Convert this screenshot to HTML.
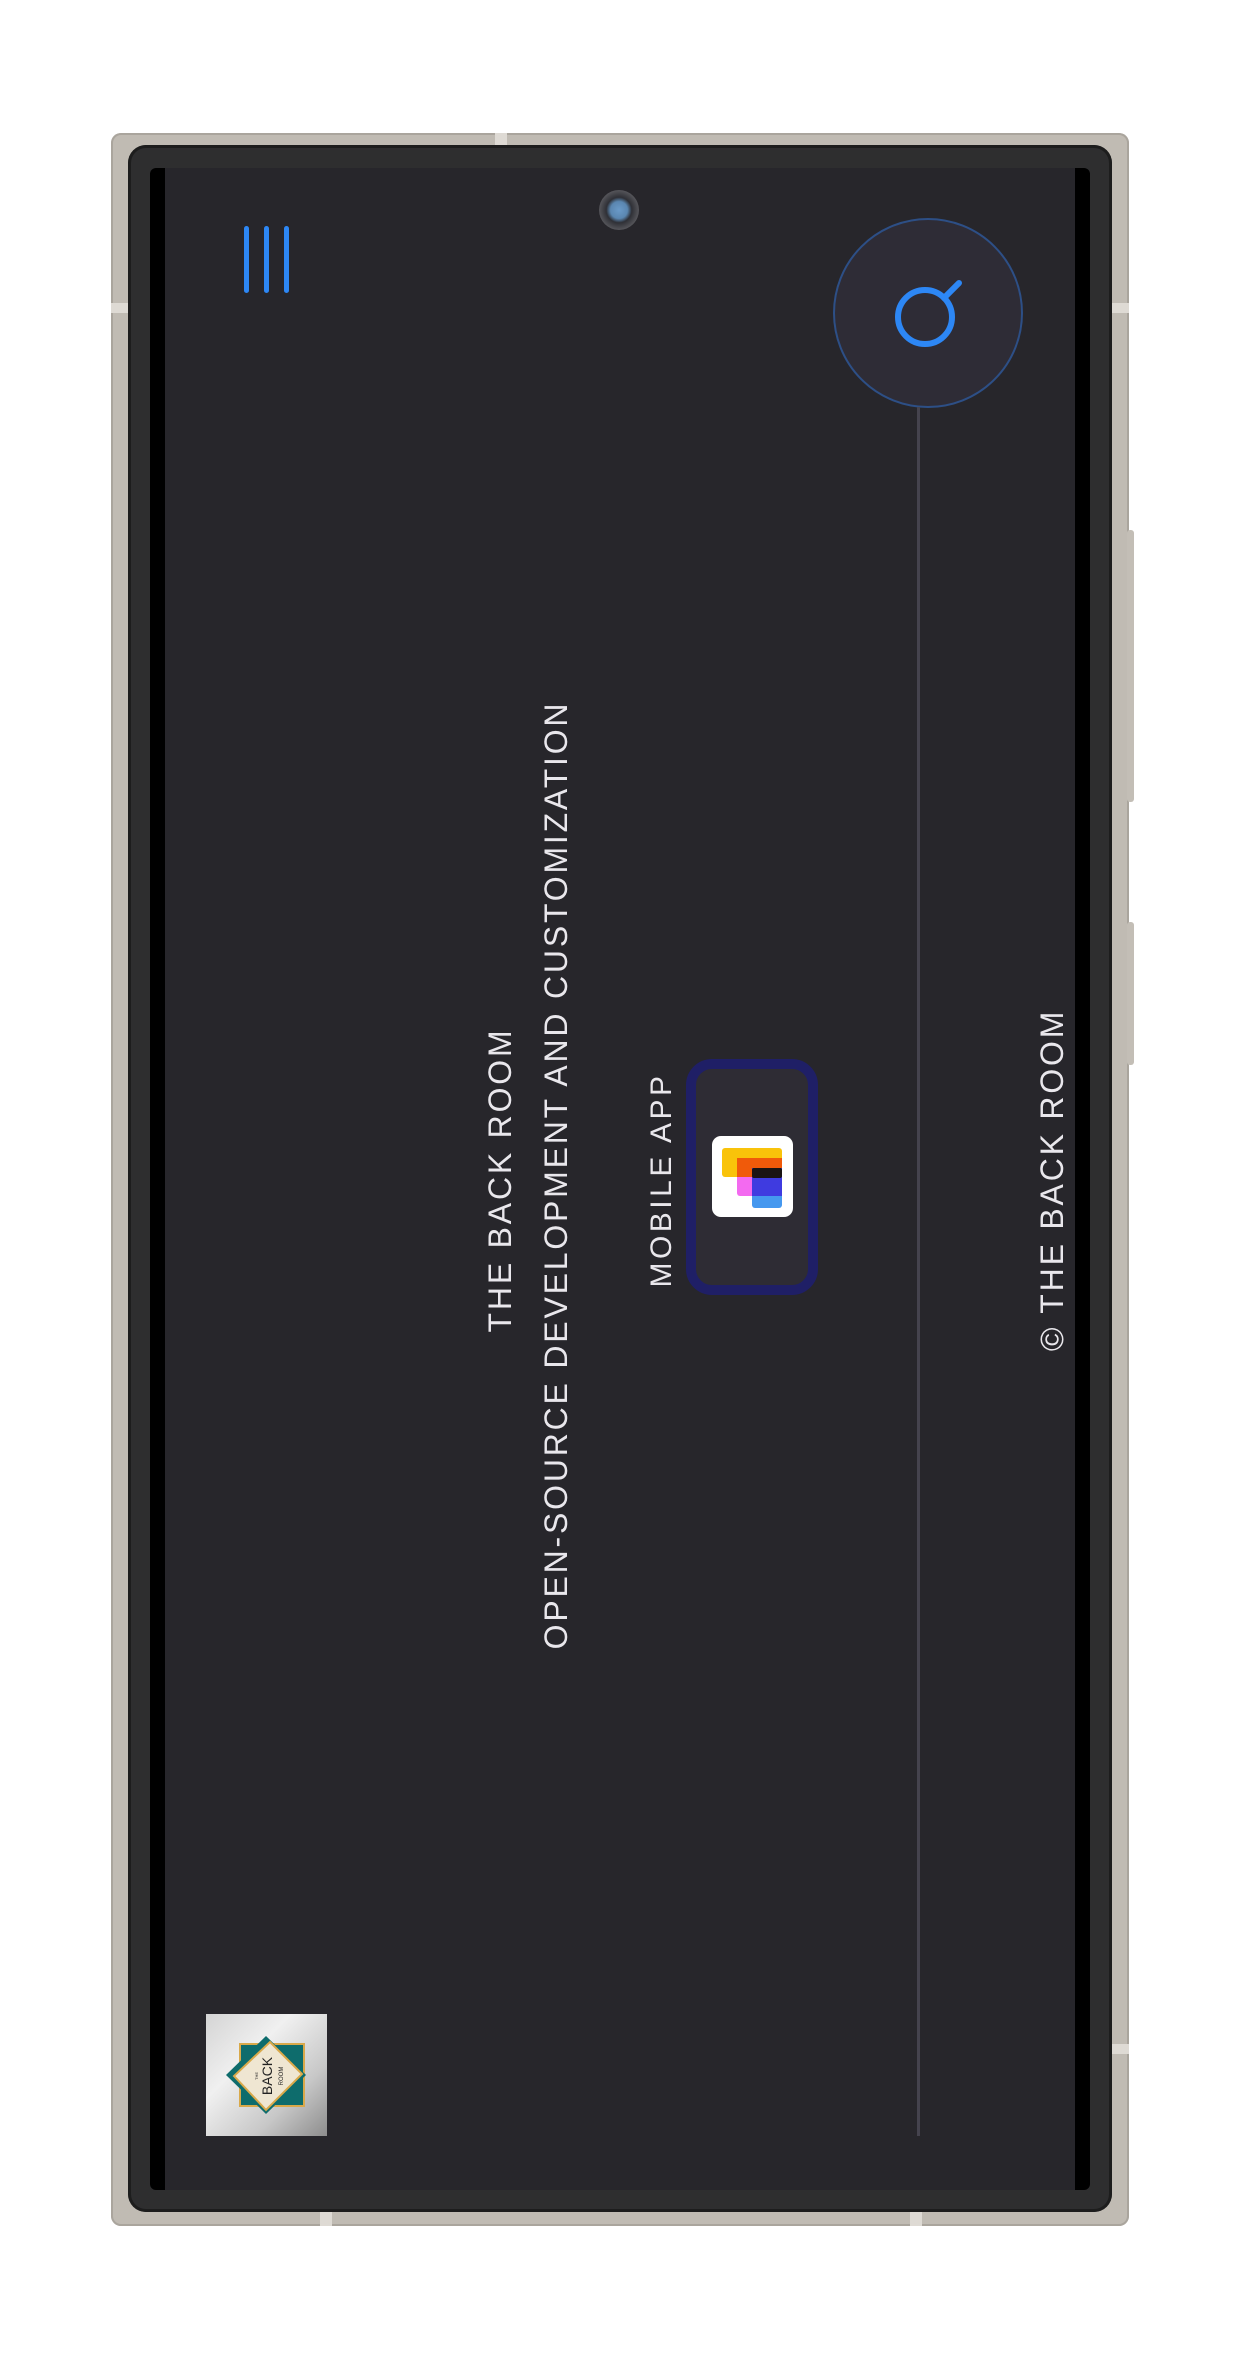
<!DOCTYPE html>
<html><head><meta charset="utf-8"><style>
html,body{margin:0;padding:0;background:#fff;}
body{width:1245px;height:2359px;position:relative;overflow:hidden;font-family:"Liberation Sans",sans-serif;}
.abs{position:absolute;}
.frame{left:111px;top:133px;width:1018px;height:2093px;background:#c0bbb3;border-radius:10px;box-shadow:inset 0 0 0 2px #aaa59d;}
.body{left:128px;top:145px;width:984px;height:2067px;background:#2e2e2f;border-radius:18px;box-shadow:inset 0 0 0 3px #1d1d1d;}
.screen{left:150px;top:168px;width:940px;height:2022px;background:#000;border-radius:6px;}
.content{left:165px;top:168px;width:910px;height:2022px;background:#27262b;}
.rt{position:absolute;transform:translate(-50%,-50%) rotate(-90deg);white-space:nowrap;color:#e9e7ec;font-size:32px;letter-spacing:2.8px;line-height:1;}
.bar{position:absolute;width:5px;height:67px;top:226px;background:#2d87f5;border-radius:3px;}
</style></head><body>
<div class="abs frame"></div>
<div class="abs" style="left:1127px;top:530px;width:7px;height:272px;background:#c3beb6;border-radius:3px;"></div>
<div class="abs" style="left:1127px;top:922px;width:7px;height:143px;background:#c3beb6;border-radius:3px;"></div>
<div class="abs" style="left:111px;top:303px;width:17px;height:10px;background:#dedad4;"></div>
<div class="abs" style="left:1112px;top:303px;width:17px;height:10px;background:#dedad4;"></div>
<div class="abs" style="left:1112px;top:2044px;width:17px;height:10px;background:#dedad4;"></div>
<div class="abs" style="left:495px;top:133px;width:12px;height:12px;background:#dedad4;"></div>
<div class="abs" style="left:320px;top:2212px;width:12px;height:14px;background:#dedad4;"></div>
<div class="abs" style="left:910px;top:2212px;width:12px;height:14px;background:#dedad4;"></div>
<div class="abs body"></div>
<div class="abs screen"></div>
<div class="abs content"></div>

<div class="bar" style="left:244px"></div>
<div class="bar" style="left:264px"></div>
<div class="bar" style="left:284px"></div>

<div class="abs" style="left:599px;top:190px;width:40px;height:40px;border-radius:50%;background:radial-gradient(circle,#6a9ac8 0,#5a86b0 30%,#2f3036 45%,#55555a 70%,#3a3a3e 100%);"></div>

<svg class="abs" style="left:820px;top:210px" width="210" height="210" viewBox="0 0 210 210">
<circle cx="108" cy="103" r="94" fill="#2e2c36" stroke="#2d4f86" stroke-width="2"/>
<circle cx="105" cy="107" r="27" fill="none" stroke="#2d87f5" stroke-width="6"/>
<line x1="124" y1="88" x2="139" y2="73" stroke="#2d87f5" stroke-width="6" stroke-linecap="round"/>
</svg>
<div class="abs" style="left:917px;top:407px;width:3px;height:1729px;background:#45434e;"></div>

<div class="rt" style="left:500px;top:1180px;">THE BACK ROOM</div>
<div class="rt" style="left:556px;top:1175px;">OPEN-SOURCE DEVELOPMENT AND CUSTOMIZATION</div>
<div class="rt" style="left:662px;top:1180px;font-size:30px;letter-spacing:3.5px;">MOBILE APP</div>
<div class="rt" style="left:1052px;top:1180px;">© THE BACK ROOM</div>

<div class="abs" style="left:686px;top:1059px;width:112px;height:216px;border:10px solid #1f1f66;border-radius:26px;background:#2e2c34;"></div>
<svg class="abs" style="left:712px;top:1136px" width="81" height="81" viewBox="0 0 81 81">
<rect x="0" y="0" width="81" height="81" rx="9" fill="#fff"/>
<rect x="10" y="12" width="60" height="29" rx="3" fill="#f9c30a"/>
<rect x="25" y="22" width="45" height="38" rx="3" fill="#f36af0"/>
<rect x="25" y="22" width="45" height="19" fill="#f05a0a"/>
<rect x="40" y="32" width="30" height="40" rx="3" fill="#4598ef"/>
<rect x="40" y="32" width="30" height="28" fill="#3f3be0"/>
<rect x="40" y="32" width="30" height="10" rx="2" fill="#1a1413"/>
</svg>

<div class="abs" style="left:206px;top:2014px;width:121px;height:122px;background:linear-gradient(135deg,#d4d4d4 0%,#f0f0f0 35%,#c8c8c8 70%,#8d8d8d 100%);"></div>
<svg class="abs" style="left:206px;top:2014px" width="121" height="122" viewBox="0 0 121 122">
<rect x="34" y="30" width="64" height="62" fill="#0e6c6c" stroke="#d9a94a" stroke-width="2"/>
<polygon points="60,22 100,61 60,100 20,61" fill="#0e6c6c"/>
<polygon points="64,28 96,60 60,96 28,62" fill="#efe6d2" stroke="#d9a94a" stroke-width="2"/>
<text x="0" y="0" transform="translate(66,62) rotate(-90)" text-anchor="middle" font-family="Liberation Sans" font-size="14" fill="#222">BACK</text>
<text x="0" y="0" transform="translate(77,62) rotate(-90)" text-anchor="middle" font-family="Liberation Sans" font-size="6" fill="#222">ROOM</text>
<text x="0" y="0" transform="translate(52,62) rotate(-90)" text-anchor="middle" font-family="Liberation Sans" font-size="4" fill="#222">THE</text>
</svg>
</body></html>
